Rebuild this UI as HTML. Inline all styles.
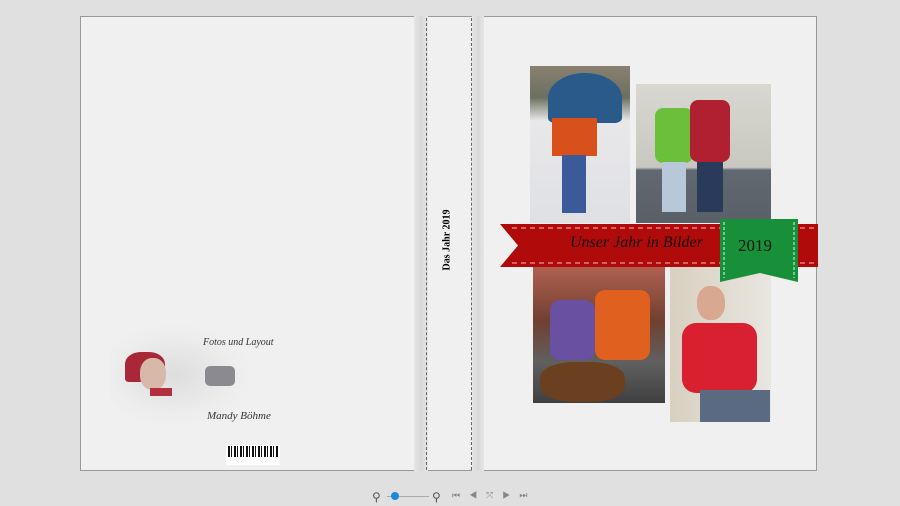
<!DOCTYPE html><html><head><style>
body{margin:0;width:900px;height:506px;background:#e0e0e0;position:relative;overflow:hidden;font-family:"Liberation Sans",sans-serif}
.a{position:absolute}
</style></head><body>
<div class="a" style="left:80px;top:16px;width:737px;height:455px;background:#f0f0f0;border:1px solid #999;box-sizing:border-box"></div>
<div class="a" style="left:414px;top:16px;width:14px;height:455px;background:linear-gradient(90deg,#e6e6e6,#d8d8d8 50%,#e6e6e6)"></div>
<div class="a" style="left:472px;top:16px;width:12px;height:455px;background:linear-gradient(90deg,#e6e6e6,#d8d8d8 50%,#e6e6e6)"></div>
<div class="a" style="left:426px;top:18px;height:452px;border-left:1px dashed #666"></div>
<div class="a" style="left:471px;top:18px;height:452px;border-left:1px dashed #666"></div>
<div class="a" style="left:447px;top:240px;transform:translate(-50%,-50%) rotate(-90deg);font:bold 10px 'Liberation Serif',serif;white-space:nowrap">Das Jahr 2019</div>
<!-- back cover author -->
<div class="a" style="left:110px;top:325px;width:140px;height:100px;background:radial-gradient(ellipse at 45% 50%,#ddd,#eee 60%,#f0f0f0 75%)"></div>
<div class="a" style="left:125px;top:352px;width:40px;height:30px;background:#a8283a;border-radius:40% 40% 10% 10%"></div>
<div class="a" style="left:140px;top:358px;width:26px;height:32px;background:#d8b8a8;border-radius:45%"></div>
<div class="a" style="left:150px;top:388px;width:22px;height:8px;background:#b03040"></div>
<div class="a" style="left:205px;top:366px;width:30px;height:20px;background:#8a8a90;border-radius:5px"></div>
<div class="a" style="left:203px;top:337px;font:italic 10px 'Liberation Serif',serif;color:#333">Fotos und Layout</div>
<div class="a" style="left:207px;top:410px;font:italic 11px 'Liberation Serif',serif;color:#333">Mandy Böhme</div>
<div class="a" style="left:226px;top:445px;width:54px;height:20px;background:#fff"></div>
<div class="a" style="left:228px;top:446px;width:50px;height:11px;background:repeating-linear-gradient(90deg,#111 0 2px,#fff 2px 3px,#111 3px 4px,#fff 4px 6px)"></div>
<!-- photos -->
<div class="a" style="left:530px;top:66px;width:100px;height:157px;background:linear-gradient(#8a8070 0,#6a7060 20%,#e8e8ea 35%,#dfe0e4 100%)"></div>
<div class="a" style="left:548px;top:73px;width:74px;height:50px;background:#2a5a8a;border-radius:50% 50% 10% 10%"></div>
<div class="a" style="left:552px;top:118px;width:45px;height:38px;background:#d8501a"></div>
<div class="a" style="left:562px;top:155px;width:24px;height:58px;background:#3a5a9a"></div>
<div class="a" style="left:636px;top:84px;width:135px;height:139px;background:linear-gradient(#d8d8d0 0,#c8c8c0 60%,#606870 62%,#5a6068 100%)"></div>
<div class="a" style="left:655px;top:108px;width:38px;height:55px;background:#6ac03a;border-radius:8px"></div>
<div class="a" style="left:690px;top:100px;width:40px;height:62px;background:#b02030;border-radius:8px"></div>
<div class="a" style="left:662px;top:162px;width:24px;height:50px;background:#b8c8d8"></div>
<div class="a" style="left:697px;top:162px;width:26px;height:50px;background:#2a3a5a"></div>
<div class="a" style="left:533px;top:267px;width:132px;height:136px;background:linear-gradient(#b06050,#704030 40%,#606060 70%,#404040)"></div>
<div class="a" style="left:550px;top:300px;width:45px;height:60px;background:#6a50a0;border-radius:10px"></div>
<div class="a" style="left:595px;top:290px;width:55px;height:70px;background:#e06020;border-radius:10px"></div>
<div class="a" style="left:540px;top:362px;width:85px;height:40px;background:#6a4020;border-radius:40%"></div>
<div class="a" style="left:670px;top:267px;width:101px;height:155px;background:linear-gradient(90deg,#d8d0c0,#e8e6e0)"></div>
<div class="a" style="left:682px;top:323px;width:75px;height:70px;background:#d82030;border-radius:14px"></div>
<div class="a" style="left:697px;top:286px;width:28px;height:34px;background:#d8a890;border-radius:45%"></div>
<div class="a" style="left:700px;top:390px;width:70px;height:32px;background:#5a6a80"></div>
<!-- banner -->
<svg class="a" style="left:498px;top:218px" width="322" height="66">
<path d="M2,6 H320 V49 H2 L20,27.5 Z" fill="#b00a0a"/>
<path d="M14,10 H318 M14,45 H318" stroke="#f0c0c0" stroke-width="1" stroke-dasharray="5,4" fill="none"/>
<path d="M222,1 H300 V64 L262,55 L222,64 Z" fill="#18903a"/>
<path d="M226,4 V60 M296,4 V60" stroke="#cfe" stroke-dasharray="3,2"/>
</svg>
<div class="a" style="left:570px;top:234px;font:italic 16px 'Liberation Serif',serif;color:#111">Unser Jahr in Bilder</div>
<div class="a" style="left:738px;top:236px;font:17px 'Liberation Serif',serif;color:#111">2019</div>
<!-- bottom controls -->
<div class="a" style="left:372px;top:490px;font-size:12px;color:#555">⚲</div>
<div class="a" style="left:387px;top:496px;width:42px;height:1px;background:#aaa"></div>
<div class="a" style="left:391px;top:492px;width:8px;height:8px;border-radius:50%;background:#1a8ae0"></div>
<div class="a" style="left:432px;top:490px;font-size:12px;color:#555">⚲</div>
<div class="a" style="left:452px;top:490px;font-size:9px;color:#888;letter-spacing:9px">⏮◀⤧▶⏭</div>
</body></html>
